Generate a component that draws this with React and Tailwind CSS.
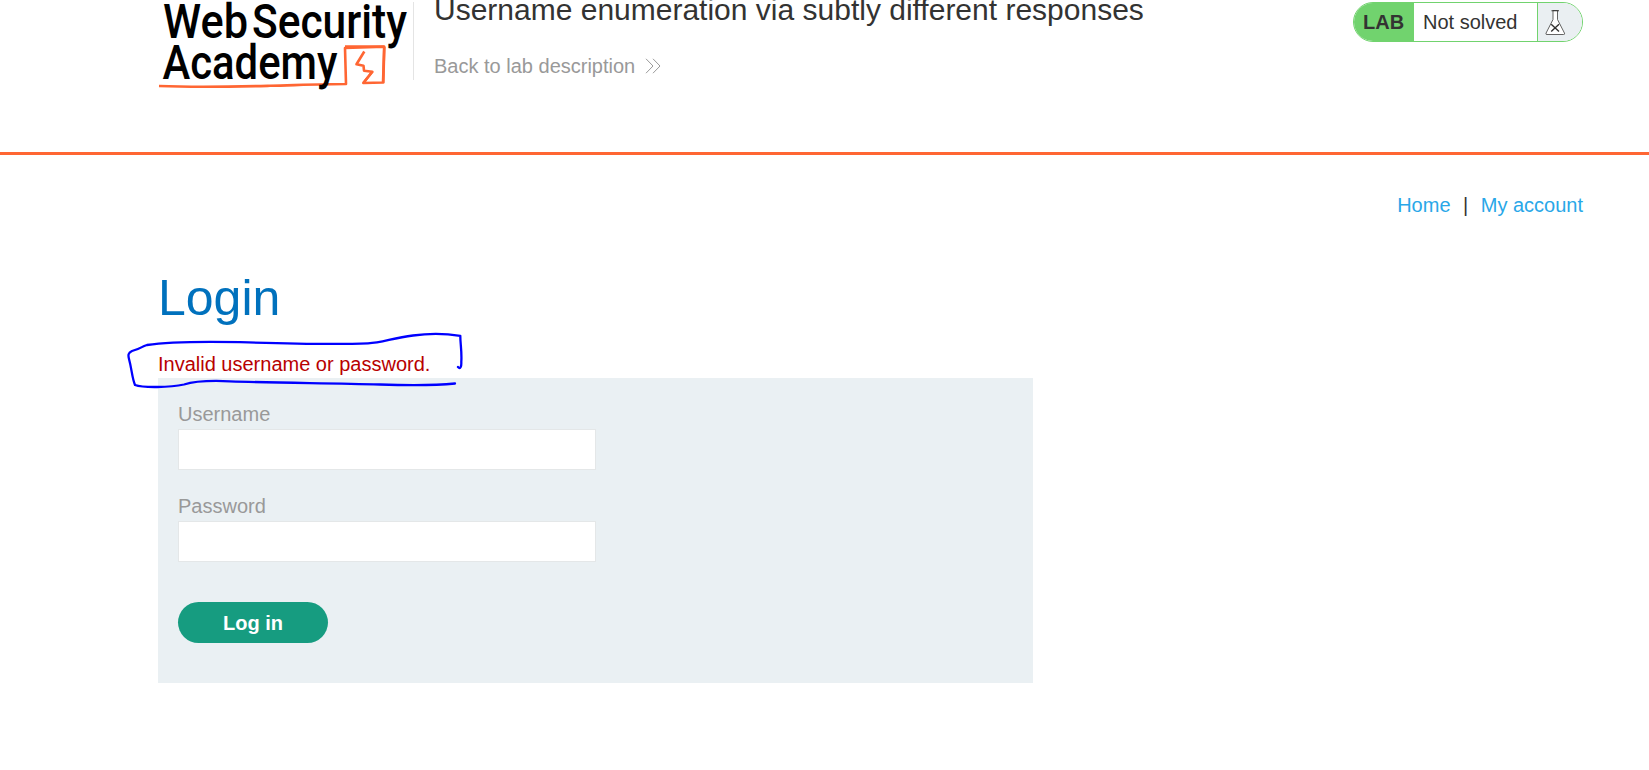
function Logo() {
  return (
    <svg className="block h-[95px] w-[255px] shrink-0" viewBox="150 0 255 95" overflow="visible" role="img" aria-label="Web Security Academy">
      <path d="M159 86 C200 87.500 240 86.500 270 85.800 C300 85 325 84 346 84 L345 48 L384.300 46.800 L383.300 82.500 L363.300 83 L372.300 71.700 L364 70.700 L363.500 65.700 L356.500 64.300 L364.300 51.500" fill="none" stroke="#ff6633" strokeWidth="2.600" strokeLinejoin="round" />
      <path d="M345 46.500 L384.500 46.500 M384.200 47 L383 83 M363.300 83 L372.500 71.500" stroke="#ff6633" strokeWidth="2.600" />
      <g fill="#000" fontFamily="Roboto, sans-serif" fontWeight="500" fontSize="48">
        <text x="163" y="38" textLength="85" lengthAdjust="spacingAndGlyphs">Web</text>
        <text x="252" y="38" textLength="155" lengthAdjust="spacingAndGlyphs">Security</text>
        <text x="162.500" y="78.500" textLength="175" lengthAdjust="spacingAndGlyphs">Academy</text>
      </g>
    </svg>
  );
}

function LabStatus() {
  return (
    <div className="mt-[2px] flex h-[40px] w-[230px] shrink-0 overflow-hidden rounded-full border border-[#71d36e] bg-white leading-[38px]">
      <div className="w-[60px] bg-[#71d36e] pl-[9px] font-bold">LAB</div>
      <div className="w-[123px] pl-[9px]">Not solved</div>
      <div className="flex-1 border-l border-[#71d36e] bg-[#eaeff2]">
        <svg className="ml-[6px] mt-[6px] h-[27px] w-[22px]" viewBox="0 0 22 27" fill="none" stroke="#333332">
          <path d="M9 1.500 V10.500 L2 24.200 Q1.500 25.500 3 25.500 H19.500 Q21 25.500 20.500 24.200 L13.500 10.500 V1.500 Z" fill="#fff" strokeWidth=".75" />
          <path d="M7.500 1.700 H15" strokeWidth="1.100" />
          <path d="M7.200 15.200 L15 22.500 M15 15.200 L7.200 22.500" strokeWidth="1.400" />
        </svg>
      </div>
    </div>
  );
}

function Field({ label, type, className }) {
  return (
    <label className={`block ${className}`}>
      <span className="block h-[31px] leading-[32px] text-[#999]">{label}</span>
      <input type={type} className="block h-[41px] w-[418px] border border-[#e4e7e8] bg-white px-2 outline-none" />
    </label>
  );
}

export default function App() {
  return (
    <div className="relative h-[770px] overflow-hidden bg-white font-['Liberation_Sans',Arial,sans-serif] text-[20px] text-[#333332]">
      <header className="flex h-[155px] items-start border-b-[3px] border-[#ff6633] pl-[150px] pr-[66px]">
        <Logo />
        <div className="ml-[8px] mt-[2px] h-[78px] w-px bg-[#e4e4e4]" />
        <div className="ml-[20px] flex-1">
          <h2 className="-mt-[8px] h-[36px] whitespace-nowrap text-[30px] leading-[36px]">Username enumeration via subtly different responses</h2>
          <a className="mt-[23px] flex h-[30px] items-center leading-[30px] text-[#999]">
            Back to lab description
            <svg className="ml-[10px] h-[16px] w-[16px]" viewBox="0 0 16 16" fill="none" stroke="#999">
              <path d="M1 .8 L8 8 L1 15.200 M8 .8 L15 8 L8 15.200" strokeWidth="1" />
            </svg>
          </a>
        </div>
        <LabStatus />
      </header>
      <main className="pl-[158px] pr-[66px]">
        <nav className="mt-[35px] flex h-[30px] justify-end leading-[30px]">
          <a className="text-[#29a7e8]">Home</a>
          <span className="mx-[12.500px]">|</span>
          <a className="text-[#29a7e8]">My account</a>
        </nav>
        <h1 className="mt-[48px] h-[60px] text-[50px] leading-[60px] text-[#0071bd]">Login</h1>
        <p className="mt-[21px] h-[29px] leading-[30px] text-[#b80000]">Invalid username or password.</p>
        <form className="h-[305px] w-[875px] bg-[#eaf0f3] px-[20px] pt-[20px]">
          <Field label="Username" type="text" className="h-[92px]" />
          <Field label="Password" type="password" className="h-[112px]" />
          <button type="button" className="block h-[41px] w-[150px] rounded-full bg-[#169c80] font-bold text-white">Log in</button>
        </form>
      </main>
      <svg className="pointer-events-none absolute left-[120px] top-[325px] h-[70px] w-[350px]" viewBox="120 325 350 70" fill="none" stroke="#0000ff" strokeWidth="2.300" strokeLinecap="round" strokeLinejoin="round">
        <path d="M458 367 C460.500 370 461.500 366 461.300 362 C462 352 460.300 344 460.300 335.800 C445 333.500 428 333.500 413 335.500 C392 338 382 343 368 343.300 C330 345 285 343.500 240 342.200 C205 341.500 170 341.500 147 345 C140 347 144 347.500 132 351 C128 353 128 355 129 359 C132 370 132 378 135 385 C143 388 170 387.500 184 384.500 C195 381 212 380.500 230 381.300 C280 383 330 383 380 384.500 C410 385.500 440 385 455 383.500" />
      </svg>
    </div>
  );
}
